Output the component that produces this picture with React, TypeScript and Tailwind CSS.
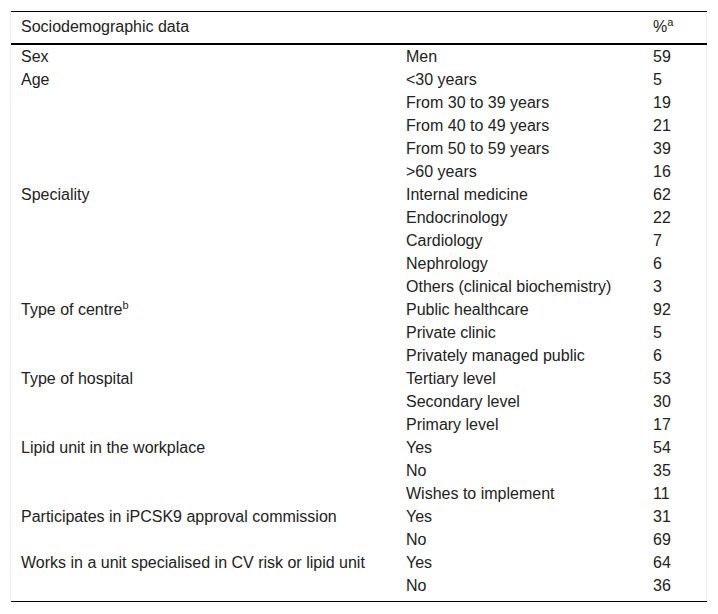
const rows: [string, string, string][] = [
  ["Sex", "Men", "59"],
  ["Age", "<30 years", "5"],
  ["", "From 30 to 39 years", "19"],
  ["", "From 40 to 49 years", "21"],
  ["", "From 50 to 59 years", "39"],
  ["", ">60 years", "16"],
  ["Speciality", "Internal medicine", "62"],
  ["", "Endocrinology", "22"],
  ["", "Cardiology", "7"],
  ["", "Nephrology", "6"],
  ["", "Others (clinical biochemistry)", "3"],
  ["Type of centre|b", "Public healthcare", "92"],
  ["", "Private clinic", "5"],
  ["", "Privately managed public", "6"],
  ["Type of hospital", "Tertiary level", "53"],
  ["", "Secondary level", "30"],
  ["", "Primary level", "17"],
  ["Lipid unit in the workplace", "Yes", "54"],
  ["", "No", "35"],
  ["", "Wishes to implement", "11"],
  ["Participates in iPCSK9 approval commission", "Yes", "31"],
  ["", "No", "69"],
  ["Works in a unit specialised in CV risk or lipid unit", "Yes", "64"],
  ["", "No", "36"],
];

const Sup = ({ children }: { children: string }) => (
  <span className="relative -top-[6px] text-[11px] leading-none">{children}</span>
);

const Label = ({ text }: { text: string }) => {
  const [main, sup] = text.split("|");
  return (
    <>
      {main}
      {sup && <Sup>{sup}</Sup>}
    </>
  );
};

const App = () => {
  return (
    <div className="bg-white min-h-[614px] pt-[11px] pl-[10px] font-['Liberation_Sans',Arial,sans-serif] text-[16px] text-[#222]">
      <div className="w-[697px] border-x border-[#ececec]">
        <table className="w-[696px] table-fixed border-collapse">
          <colgroup>
            <col className="w-[385px]" />
            <col className="w-[247px]" />
            <col className="w-[64px]" />
          </colgroup>
          <thead>
            <tr className="border-t border-black border-b-2 h-[32px]">
              <th className="text-left font-normal pl-[10px]">Sociodemographic data</th>
              <th></th>
              <th className="text-left font-normal pl-[10px]">
                %<Sup>a</Sup>
              </th>
            </tr>
          </thead>
          <tbody className="border-b border-black">
            {rows.map((r, i) => (
              <tr key={i} className="h-[23px] leading-[23px]">
                <td className="pl-[10px] whitespace-nowrap">
                  <Label text={r[0]} />
                </td>
                <td className="pl-[10px] whitespace-nowrap">{r[1]}</td>
                <td className="pl-[10px]">{r[2]}</td>
              </tr>
            ))}
            <tr className="h-[5px]">
              <td colSpan={3}></td>
            </tr>
          </tbody>
        </table>
      </div>
    </div>
  );
};

export default App;
